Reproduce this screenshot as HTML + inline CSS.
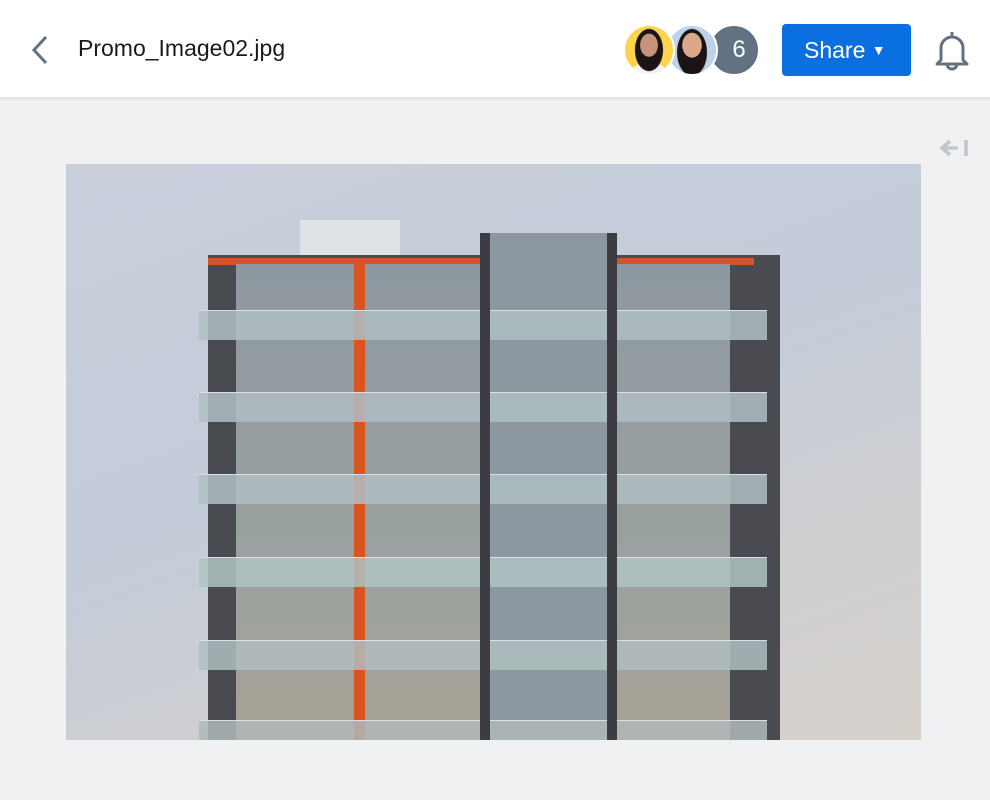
<!DOCTYPE html>
<html><head><style>
*{margin:0;padding:0;box-sizing:border-box}
body{width:990px;height:800px;background:#f0f1f3;font-family:"Liberation Sans",sans-serif;position:relative;overflow:hidden}
.hdr{position:absolute;left:0;top:0;width:990px;height:100px;background:#fff;border-bottom:3px solid #e4e5e8}
.title{position:absolute;left:78px;top:35px;font-size:23px;color:#1e1919}
.av{position:absolute;top:24px;width:52px;height:52px;border-radius:50%;border:2px solid #fff}
.share{position:absolute;left:782px;top:24px;width:129px;height:52px;background:#0a6fe0;border-radius:4px;color:#fff;font-size:23px;line-height:52px;padding-left:22px}
.img{position:absolute;left:66px;top:164px;width:855px;height:576px;overflow:hidden;background:linear-gradient(160deg,#c9cfdb 0%,#c4ccd9 45%,#cfcfd0 75%,#d6d0cb 100%)}
.a{position:absolute}
</style></head><body>
<div class="hdr">
<svg class="a" style="left:28px;top:34px" width="24" height="32" viewBox="0 0 24 32"><path d="M18 3 L6 16 L18 29" stroke="#637282" stroke-width="3" fill="none"/></svg>
<div class="title">Promo_Image02.jpg</div>
<div class="av" style="left:708px;background:#637282;color:#fff;font-size:24px;text-align:center;line-height:48px;padding-left:10px">6</div>
<div class="av" style="left:666px;background:radial-gradient(ellipse 22% 28% at 50% 40%,#d9a98a 0 90%,transparent 95%),radial-gradient(ellipse 32% 50% at 50% 55%,#1a1514 0 95%,transparent 100%),#bcd3ea"></div>
<div class="av" style="left:623px;background:radial-gradient(ellipse 20% 26% at 50% 40%,#c7927a 0 90%,transparent 95%),radial-gradient(ellipse 30% 45% at 50% 50%,#1a1514 0 95%,transparent 100%),radial-gradient(ellipse 40% 25% at 50% 100%,#f2f2f2 0 95%,transparent 100%),#fed34d"></div>
<div class="share">Share <span style="font-size:14px;position:relative;top:-3px">▼</span></div>
<svg class="a" style="left:932px;top:28px" width="40" height="44" viewBox="0 0 40 44"><path d="M20 4v4M9 32V20a11 11 0 0 1 22 0v12l4 4H5z M15 36a5 5 0 0 0 10 0" stroke="#637282" stroke-width="3" fill="none" stroke-linejoin="round"/></svg>
</div>
<svg class="a" style="left:938px;top:138px" width="32" height="20" viewBox="0 0 32 20"><path d="M12 3L4 10l8 7M4 10h16M28 2v16" stroke="#c1c6cc" stroke-width="3.5" fill="none"/></svg>
<div class="img">
<div class="a" style="left:234px;top:56px;width:100px;height:36px;background:#dfe2e6"></div>
<div class="a" style="left:142px;top:91px;width:572px;height:490px;background:#4a4b50"></div>
<div class="a" style="left:142px;top:94px;width:546px;height:7px;background:#d2562a"></div>
<div class="a" style="left:170px;top:100px;width:494px;height:480px;background:linear-gradient(180deg,#8e98a0,#9aa1a0 60%,#a8a394)"></div>
<div class="a" style="left:414px;top:69px;width:137px;height:510px;background:#8d979f"></div>
<div class="a" style="left:288px;top:100px;width:11px;height:480px;background:#d9541f"></div>
<div class="a" style="left:133px;top:146px;width:568px;height:30px;background:rgba(175,190,195,.85);border-top:1px solid #dde"></div>
<div class="a" style="left:133px;top:228px;width:568px;height:30px;background:rgba(175,190,195,.85);border-top:1px solid #dde"></div>
<div class="a" style="left:133px;top:310px;width:568px;height:30px;background:rgba(175,190,195,.85);border-top:1px solid #dde"></div>
<div class="a" style="left:133px;top:393px;width:568px;height:30px;background:rgba(175,195,195,.85);border-top:1px solid #dde"></div>
<div class="a" style="left:133px;top:476px;width:568px;height:30px;background:rgba(175,190,190,.85);border-top:1px solid #dde"></div>
<div class="a" style="left:133px;top:556px;width:568px;height:20px;background:rgba(175,185,185,.85);border-top:1px solid #dde"></div>
<div class="a" style="left:414px;top:69px;width:10px;height:510px;background:#3c3d43"></div>
<div class="a" style="left:541px;top:69px;width:10px;height:510px;background:#3c3d43"></div>
</div>
</body></html>
